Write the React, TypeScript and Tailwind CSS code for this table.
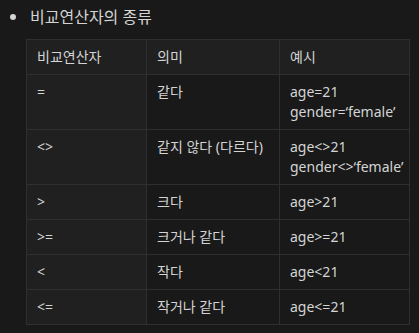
import React from 'react'

interface Row {
  op: string
  meaning: string
  example: string[]
}

const rows: Row[] = [
  { op: '=', meaning: '같다', example: ['age=21', 'gender=‘female’'] },
  { op: '<>', meaning: '같지 않다 (다르다)', example: ['age<>21', 'gender<>‘female’'] },
  { op: '>', meaning: '크다', example: ['age>21'] },
  { op: '>=', meaning: '크거나 같다', example: ['age>=21'] },
  { op: '<', meaning: '작다', example: ['age<21'] },
  { op: '<=', meaning: '작거나 같다', example: ['age<=21'] },
]

const font = { fontFamily: '"Noto Sans", "Noto Sans CJK KR", sans-serif' }

const App: React.FC = () => {
  return (
    <div className="w-[419px] h-[333px] bg-[#191919] text-[#d4d4d4] overflow-hidden" style={font}>
      <div className="flex items-center h-[24px] mt-[5px] pl-[10px]">
        <span className="w-[6px] h-[6px] rounded-full bg-[#d4d4d4]" />
        <span className="ml-[14px] text-[16px] leading-[24px]">비교연산자의 종류</span>
      </div>
      <table className="ml-[26px] mt-[10px] border-collapse text-[14px] leading-[20px] table-fixed w-[383px]">
        <colgroup>
          <col className="w-[120px]" />
          <col className="w-[133px]" />
          <col className="w-[130px]" />
        </colgroup>
        <thead>
          <tr className="bg-[#202020]">
            <th className="border border-[#2f2f2f] px-[10px] py-[7px] text-left font-normal">비교연산자</th>
            <th className="border border-[#2f2f2f] px-[10px] py-[7px] text-left font-normal">의미</th>
            <th className="border border-[#2f2f2f] px-[10px] py-[7px] text-left font-normal">예시</th>
          </tr>
        </thead>
        <tbody>
          {rows.map((r) => (
            <tr key={r.op}>
              <td className="border border-[#2f2f2f] bg-[#202020] px-[10px] py-[7px] align-top">{r.op}</td>
              <td className="border border-[#2f2f2f] px-[10px] py-[7px] align-top">{r.meaning}</td>
              <td className="border border-[#2f2f2f] px-[10px] py-[7px] align-top">
                {r.example.map((e) => (
                  <div key={e}>{e}</div>
                ))}
              </td>
            </tr>
          ))}
        </tbody>
      </table>
    </div>
  )
}

export default App
